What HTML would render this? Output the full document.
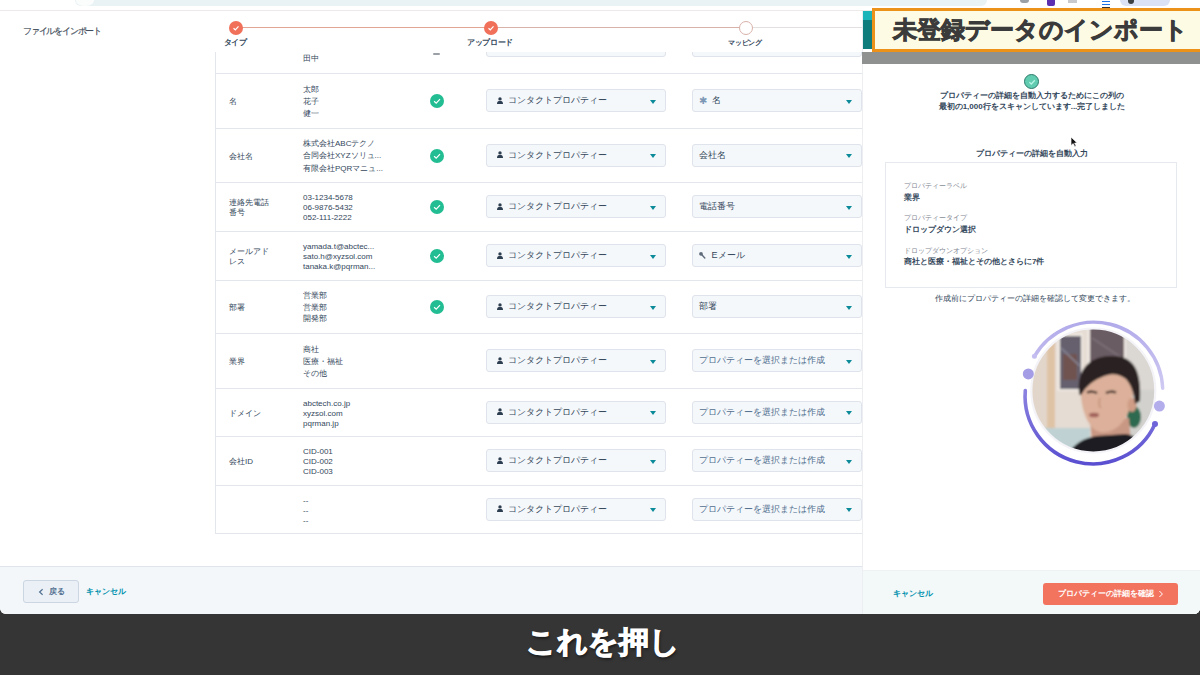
<!DOCTYPE html>
<html lang="ja">
<head>
<meta charset="utf-8">
<style>
*{box-sizing:border-box;margin:0;padding:0}
html,body{width:1200px;height:675px;overflow:hidden;background:#353535}
body{position:relative;font-family:"Liberation Sans",sans-serif;color:#33475b}
.abs{position:absolute}
#win{position:absolute;left:0;top:0;width:1200px;height:614px;background:#fff;border-radius:0 0 6px 6px;overflow:hidden}
#topbar{position:absolute;z-index:5;left:0;top:0;width:1200px;height:11px;background:#fff;border-bottom:1px solid #efeaea}
.pill{position:absolute;top:-6px;height:12px;border-radius:6px}
.step{position:absolute;top:20.5px;margin-left:0.7px;width:14px;height:14px;border-radius:50%;background:#f0705a}
.step svg{position:absolute;left:3px;top:3px}
.slabel{position:absolute;top:37.5px;font-size:7.6px;letter-spacing:-0.4px;font-weight:bold;color:#33475b;white-space:nowrap;transform:translateX(-50%)}
.row{position:absolute;left:215px;width:660px;border-bottom:1px solid #e3e7ec}
.lbl{position:absolute;left:14px;width:42px;font-size:8px;line-height:10px;color:#33475b;top:50%;transform:translateY(-50%);margin-top:1px}
.dat{position:absolute;left:88px;font-size:8px;color:#33475b;top:50%;transform:translateY(-50%);margin-top:1px;white-space:nowrap}
.chk{position:absolute;left:215px;width:14px;height:14px;border-radius:50%;background:#22bd92;top:50%;margin-top:-7px}
.chk svg{position:absolute;left:3px;top:3px}
.dd{position:absolute;height:23px;top:50%;margin-top:-12px;background:#f5f8fa;border:1px solid #dfe3eb;border-radius:3px;font-size:9px;line-height:21px;color:#33475b;white-space:nowrap}
.dd1{left:271px;width:180px}
.dd2{left:477px;width:170px}
.dd .t{position:absolute;left:20.5px;top:0}
.dd2 .t{left:6px}
.dd .ar{position:absolute;right:9.5px;top:9.5px;width:0;height:0;border-left:3.5px solid transparent;border-right:3.5px solid transparent;border-top:4px solid #0b8a9a}
.pi{position:absolute;left:10px;top:6.5px;width:6px;height:7px}

.dd2 .t2{left:18.5px}
#foot{position:absolute;left:0;top:566px;width:1200px;height:48px;background:#f3f7f9;border-top:1px solid #dfe5ea}
.btn-back{position:absolute;left:23px;top:13px;width:56px;height:23px;background:#eaf0f6;border:1px solid #cbd6e2;border-radius:3px;font-size:8px;font-weight:bold;color:#516f90;line-height:21px}
.link{position:absolute;font-size:8px;font-weight:bold;color:#0091ae;white-space:nowrap}
#panel{position:absolute;left:862px;top:0;width:338px;height:614px;background:#fff;border-left:1px solid #eceef1}
#pfoot{position:absolute;left:0;top:570px;width:338px;height:44px;background:#f3f8f9;border-top:1px solid #eef2f3}
.btn-pri{position:absolute;left:180px;top:12px;width:135px;height:22px;background:#f2735e;border-radius:3px;color:#fff;font-size:8px;font-weight:bold;line-height:22px;white-space:nowrap}
.ptxt{position:absolute;white-space:nowrap;font-size:8px;color:#33475b}
#banner{position:absolute;z-index:6;left:862px;top:8px;width:338px;height:56px}
#sub{position:absolute;left:0;top:614px;width:1200px;padding-left:5px;height:61px;text-align:center;color:#fff;font-weight:bold;font-size:30px;line-height:55px;text-shadow:1px 2px 3px rgba(0,0,0,.6);-webkit-text-stroke:1.1px #fff}
</style>
</head>
<body>
<div id="win">
  <div id="topbar">
    <div class="pill" style="left:75px;width:912px;background:#e9f2f5"></div><div class="pill" style="left:76px;width:18px;height:11px;top:-5px;background:#fbfcfc;border-radius:50%"></div>
    <div class="pill" style="left:1120px;width:50px;background:#dbe2f6"></div>
    <div class="abs" style="left:1128px;top:0;width:6px;height:4px;border-radius:0 0 3px 3px;background:#3c4043"></div>
    <div class="abs" style="left:1020px;top:0;width:9px;height:3px;border-radius:0 0 4px 4px;background:#9aa0a6"></div>
    <div class="abs" style="left:1047px;top:0;width:8px;height:6px;border-radius:0 0 2px 2px;background:#5b2fb0"></div>
    <div class="abs" style="left:1068px;top:0;width:9px;height:3px;background:#c7c9cc"></div>
    <div class="abs" style="left:1102px;top:1px;width:8px;height:1px;background:#1a73e8"></div>
    <div class="abs" style="left:1102px;top:4px;width:8px;height:1px;background:#1a73e8"></div>
    <div class="abs" style="left:1102px;top:7px;width:8px;height:1px;background:#333"></div>
  </div>

  <div class="abs" style="left:23px;top:26px;font-size:8.5px;letter-spacing:-1.2px;color:#3d4a57;-webkit-text-stroke:0.15px #3d4a57;white-space:nowrap">ファイルをインポート</div>

  <!-- stepper -->
  <div class="abs" style="left:235px;top:27px;width:255px;height:1px;background:#e2a596"></div><div class="abs" style="left:490px;top:27px;width:255px;height:1px;background:#d8b2a9"></div><div class="abs" style="left:750px;top:27px;width:112px;height:1px;background:#e4e0df"></div>
  <div class="step" style="left:228px"><svg width="8" height="8" viewBox="0 0 8 8"><path d="M1.5 4.2 L3.3 5.8 L6.5 2.3" stroke="#fff" stroke-width="1.2" fill="none"/></svg></div>
  <div class="step" style="left:483px"><svg width="8" height="8" viewBox="0 0 8 8"><path d="M1.5 4.2 L3.3 5.8 L6.5 2.3" stroke="#fff" stroke-width="1.2" fill="none"/></svg></div>
  <div class="step" style="left:738px;background:#fff;border:1px solid #d8b2a9"></div>
  <div class="slabel" style="left:235px">タイプ</div>
  <div class="slabel" style="left:490px">アップロード</div>
  <div class="slabel" style="left:745px;font-size:7.2px">マッピング</div>

  <div id="tbl" class="abs" style="left:0;top:52px;width:862px;height:482px;overflow:hidden">
<div class="abs" style="left:215px;top:0;width:1px;height:481px;background:#e3e7ec"></div>
<div class="row" style="top:-33px;height:55px">
<div class="lbl">姓</div>
<div class="dat" style="line-height:12px">山田<br>佐藤<br>田中</div>
<div class="dd dd1"><svg class="pi" viewBox="0 0 6 7"><circle cx="3" cy="1.9" r="1.7" fill="#2d3e50"/><path d="M0 7 C0 4.2 1.2 3.9 3 3.9 C4.8 3.9 6 4.2 6 7Z" fill="#2d3e50"/></svg><span class="t">コンタクトプロパティー</span><i class="ar"></i></div>
<div class="dd dd2"><span class="t">姓</span><i class="ar"></i></div>
</div>
<div class="row" style="top:22px;height:55px">
<div class="lbl">名</div>
<div class="dat" style="line-height:12px">太郎<br>花子<br>健一</div>
<div class="chk"><svg width="8" height="8" viewBox="0 0 8 8"><path d="M1.1 4.2 L3.2 6.1 L7 2.2" stroke="#fff" stroke-width="1.2" fill="none"/></svg></div>
<div class="dd dd1"><svg class="pi" viewBox="0 0 6 7"><circle cx="3" cy="1.9" r="1.7" fill="#2d3e50"/><path d="M0 7 C0 4.2 1.2 3.9 3 3.9 C4.8 3.9 6 4.2 6 7Z" fill="#2d3e50"/></svg><span class="t">コンタクトプロパティー</span><i class="ar"></i></div>
<div class="dd dd2"><span class="ic" style="position:absolute;left:6px;top:0;font-size:10px;color:#7c98b6">✱</span><span class="t t2">名</span><i class="ar"></i></div>
</div>
<div class="row" style="top:77px;height:54px">
<div class="lbl">会社名</div>
<div class="dat" style="line-height:12.5px">株式会社ABCテクノ<br>合同会社XYZソリュ...<br>有限会社PQRマニュ...</div>
<div class="chk"><svg width="8" height="8" viewBox="0 0 8 8"><path d="M1.1 4.2 L3.2 6.1 L7 2.2" stroke="#fff" stroke-width="1.2" fill="none"/></svg></div>
<div class="dd dd1"><svg class="pi" viewBox="0 0 6 7"><circle cx="3" cy="1.9" r="1.7" fill="#2d3e50"/><path d="M0 7 C0 4.2 1.2 3.9 3 3.9 C4.8 3.9 6 4.2 6 7Z" fill="#2d3e50"/></svg><span class="t">コンタクトプロパティー</span><i class="ar"></i></div>
<div class="dd dd2"><span class="t">会社名</span><i class="ar"></i></div>
</div>
<div class="row" style="top:131px;height:49px">
<div class="lbl">連絡先電話<br>番号</div>
<div class="dat" style="line-height:10px">03-1234-5678<br>06-9876-5432<br>052-111-2222</div>
<div class="chk"><svg width="8" height="8" viewBox="0 0 8 8"><path d="M1.1 4.2 L3.2 6.1 L7 2.2" stroke="#fff" stroke-width="1.2" fill="none"/></svg></div>
<div class="dd dd1"><svg class="pi" viewBox="0 0 6 7"><circle cx="3" cy="1.9" r="1.7" fill="#2d3e50"/><path d="M0 7 C0 4.2 1.2 3.9 3 3.9 C4.8 3.9 6 4.2 6 7Z" fill="#2d3e50"/></svg><span class="t">コンタクトプロパティー</span><i class="ar"></i></div>
<div class="dd dd2"><span class="t">電話番号</span><i class="ar"></i></div>
</div>
<div class="row" style="top:180px;height:49px">
<div class="lbl">メールアド<br>レス</div>
<div class="dat" style="line-height:10px">yamada.t@abctec...<br>sato.h@xyzsol.com<br>tanaka.k@pqrman...</div>
<div class="chk"><svg width="8" height="8" viewBox="0 0 8 8"><path d="M1.1 4.2 L3.2 6.1 L7 2.2" stroke="#fff" stroke-width="1.2" fill="none"/></svg></div>
<div class="dd dd1"><svg class="pi" viewBox="0 0 6 7"><circle cx="3" cy="1.9" r="1.7" fill="#2d3e50"/><path d="M0 7 C0 4.2 1.2 3.9 3 3.9 C4.8 3.9 6 4.2 6 7Z" fill="#2d3e50"/></svg><span class="t">コンタクトプロパティー</span><i class="ar"></i></div>
<div class="dd dd2"><svg class="ic" style="position:absolute;left:5px;top:6px" width="9" height="9" viewBox="0 0 9 9"><path d="M3.6 3.6 L6.8 7" stroke="#5d6b7a" stroke-width="1.4" stroke-linecap="round"/><circle cx="3" cy="2.9" r="1.9" fill="#5d6b7a"/></svg><span class="t t2">Eメール</span><i class="ar"></i></div>
</div>
<div class="row" style="top:229px;height:53px">
<div class="lbl">部署</div>
<div class="dat" style="line-height:11.7px">営業部<br>営業部<br>開発部</div>
<div class="chk"><svg width="8" height="8" viewBox="0 0 8 8"><path d="M1.1 4.2 L3.2 6.1 L7 2.2" stroke="#fff" stroke-width="1.2" fill="none"/></svg></div>
<div class="dd dd1"><svg class="pi" viewBox="0 0 6 7"><circle cx="3" cy="1.9" r="1.7" fill="#2d3e50"/><path d="M0 7 C0 4.2 1.2 3.9 3 3.9 C4.8 3.9 6 4.2 6 7Z" fill="#2d3e50"/></svg><span class="t">コンタクトプロパティー</span><i class="ar"></i></div>
<div class="dd dd2"><span class="t">部署</span><i class="ar"></i></div>
</div>
<div class="row" style="top:282px;height:55px">
<div class="lbl">業界</div>
<div class="dat" style="line-height:11.9px">商社<br>医療・福祉<br>その他</div>
<div class="dd dd1"><svg class="pi" viewBox="0 0 6 7"><circle cx="3" cy="1.9" r="1.7" fill="#2d3e50"/><path d="M0 7 C0 4.2 1.2 3.9 3 3.9 C4.8 3.9 6 4.2 6 7Z" fill="#2d3e50"/></svg><span class="t">コンタクトプロパティー</span><i class="ar"></i></div>
<div class="dd dd2"><span class="t" style="color:#516f90">プロパティーを選択または作成</span><i class="ar"></i></div>
</div>
<div class="row" style="top:337px;height:48px">
<div class="lbl">ドメイン</div>
<div class="dat" style="line-height:10.2px">abctech.co.jp<br>xyzsol.com<br>pqrman.jp</div>
<div class="dd dd1"><svg class="pi" viewBox="0 0 6 7"><circle cx="3" cy="1.9" r="1.7" fill="#2d3e50"/><path d="M0 7 C0 4.2 1.2 3.9 3 3.9 C4.8 3.9 6 4.2 6 7Z" fill="#2d3e50"/></svg><span class="t">コンタクトプロパティー</span><i class="ar"></i></div>
<div class="dd dd2"><span class="t" style="color:#516f90">プロパティーを選択または作成</span><i class="ar"></i></div>
</div>
<div class="row" style="top:385px;height:49px">
<div class="lbl">会社ID</div>
<div class="dat" style="line-height:10.1px">CID-001<br>CID-002<br>CID-003</div>
<div class="dd dd1"><svg class="pi" viewBox="0 0 6 7"><circle cx="3" cy="1.9" r="1.7" fill="#2d3e50"/><path d="M0 7 C0 4.2 1.2 3.9 3 3.9 C4.8 3.9 6 4.2 6 7Z" fill="#2d3e50"/></svg><span class="t">コンタクトプロパティー</span><i class="ar"></i></div>
<div class="dd dd2"><span class="t" style="color:#516f90">プロパティーを選択または作成</span><i class="ar"></i></div>
</div>
<div class="row" style="top:434px;height:48px">
<div class="lbl"></div>
<div class="dat" style="line-height:10px">--<br>--<br>--</div>
<div class="dd dd1"><svg class="pi" viewBox="0 0 6 7"><circle cx="3" cy="1.9" r="1.7" fill="#2d3e50"/><path d="M0 7 C0 4.2 1.2 3.9 3 3.9 C4.8 3.9 6 4.2 6 7Z" fill="#2d3e50"/></svg><span class="t">コンタクトプロパティー</span><i class="ar"></i></div>
<div class="dd dd2"><span class="t" style="color:#516f90">プロパティーを選択または作成</span><i class="ar"></i></div>
</div>
<div class="abs" style="left:433px;top:1px;width:7px;height:1.5px;background:#9aa0a6;border-radius:1px"></div>
</div><!--/tbl-->

  <div id="foot">
    <div class="btn-back"><svg class="abs" style="left:14px;top:7px" width="6" height="8" viewBox="0 0 6 8"><path d="M4.6 1.2 L1.6 4 L4.6 6.8" stroke="#516f90" stroke-width="1.2" fill="none"/></svg><span style="position:absolute;left:25px">戻る</span></div>
    <div class="link" style="left:86px;top:19px">キャンセル</div>
  </div>

  <div id="panel">
    <div class="abs" style="left:161px;top:74px;width:15px;height:15px;border-radius:50%;background:#62ccb0;border:1.2px solid #2b7a6b"><svg class="abs" style="left:2.5px;top:2.5px" width="8" height="8" viewBox="0 0 8 8"><path d="M1.4 4.3 L3.3 6 L6.8 2.2" stroke="#b9f5e6" stroke-width="1.3" fill="none"/></svg></div>
    <div class="ptxt" style="left:0;width:338px;text-align:center;top:91px;font-weight:bold;line-height:10.5px">プロパティーの詳細を自動入力するためにこの列の<br>最初の1,000行をスキャンしています...完了しました</div>
    <div class="ptxt" style="left:0;width:338px;text-align:center;top:148px;font-weight:bold">プロパティーの詳細を自動入力</div>
    <div class="abs" style="left:22px;top:162px;width:292px;height:126px;border:1px solid #e6e9ee"></div>
    <div class="ptxt" style="left:41px;top:181px;font-size:7px;color:#7f8791">プロパティーラベル</div>
    <div class="ptxt" style="left:41px;top:192px;font-weight:bold">業界</div>
    <div class="ptxt" style="left:41px;top:213px;font-size:7px;color:#7f8791">プロパティータイプ</div>
    <div class="ptxt" style="left:41px;top:224px;font-weight:bold">ドロップダウン選択</div>
    <div class="ptxt" style="left:41px;top:246px;font-size:7px;color:#7f8791">ドロップダウンオプション</div>
    <div class="ptxt" style="left:41px;top:256px;font-weight:bold">商社と医療・福祉とその他とさらに7件</div>
    <div class="ptxt" style="left:3px;width:338px;text-align:center;top:293px">作成前にプロパティーの詳細を確認して変更できます。</div>
    <div id="pfoot">
      <div class="link" style="left:30px;top:17px">キャンセル</div>
      <div class="btn-pri"><span style="position:absolute;left:15px">プロパティーの詳細を確認</span><svg class="abs" style="left:115px;top:7px" width="6" height="8" viewBox="0 0 6 8"><path d="M1.4 1 L4.4 4 L1.4 7" stroke="#fff" stroke-width="1" fill="none"/></svg></div>
    </div>
  </div>

  <div id="banner">
    <div class="abs" style="left:0;top:44px;width:338px;height:12px;background:#8f9191"></div>
    <div class="abs" style="left:1px;top:3px;width:9px;height:38px;background:#0e7d7b"></div>
    <div class="abs" style="left:1px;top:3px;width:9px;height:9px;background:#1bb4b8"></div>
    <div class="abs" style="left:10px;top:0;width:340px;height:44px;background:#fdfbe3;border:3px solid #ec921a;border-right:none"></div>
    <div class="abs" style="left:31px;top:6px;font-size:24px;font-weight:bold;color:#3b3b3b;white-space:nowrap;line-height:32px;-webkit-text-stroke:0.9px #3b3b3b">未登録データのインポート</div>
  </div>

  <svg class="abs" style="left:1010px;top:308px" width="168" height="168" viewBox="0 0 168 168">
    <defs>
      <clipPath id="cc"><circle cx="83.3" cy="82.5" r="62"/></clipPath>
      <linearGradient id="gb" x1="0" y1="0" x2="0" y2="1"><stop offset="0" stop-color="#8b82e0"/><stop offset="1" stop-color="#5a4fd0"/></linearGradient>
      <linearGradient id="gt" x1="0" y1="1" x2="0" y2="0"><stop offset="0" stop-color="#cfcaf2"/><stop offset="1" stop-color="#b1aaea"/></linearGradient>
      <filter id="bl"><feGaussianBlur stdDeviation="0.9"/></filter>
    </defs>
    <g clip-path="url(#cc)" filter="url(#bl)">
      <g transform="translate(20,20)">
      <rect x="-5" y="-5" width="140" height="140" fill="#e5dcd3"/>
      <rect x="-5" y="-5" width="22" height="140" fill="#e2d6ca"/>
      <rect x="17" y="-5" width="8" height="110" fill="#dfc3a5"/>
      <rect x="96" y="-5" width="40" height="140" fill="#dbd7d3"/>
      <rect x="96" y="62" width="40" height="70" fill="#d2d1cd"/>
      <rect x="27" y="5" width="26" height="58" fill="#eee8e2"/>
      <rect x="30" y="8" width="21" height="53" fill="#66606e"/>
      <rect x="33" y="26" width="14" height="26" fill="#70524f"/>
      <path d="M31 20 L50 38" stroke="#8a8a9a" stroke-width="1.5"/>
      <rect x="57" y="-4" width="39" height="41" fill="#eee8e2"/>
      <rect x="60" y="-2" width="34" height="37" fill="#6a5c63"/>
      <path d="M62 10 L92 30" stroke="#80767c" stroke-width="1.5"/>
      <rect x="-5" y="100" width="65" height="30" fill="#c0d1d3"/>
      <ellipse cx="104" cy="89" rx="7" ry="11" fill="#2f6a50"/>
      <path d="M60 92 L99 90 L101 114 L62 116 Z" fill="#c99884"/>
      <path d="M36 130 C42 116 54 110 66 108 L96 106 C108 108 118 116 122 130 Z" fill="#1f1e22"/>
      <path d="M51 58 C50 76 55 94 65 102 C71 106 81 105 89 98 C97 90 103 78 103 60 C103 45 90 38 76 38 C60 38 52 45 51 58 Z" fill="#dcb09a"/>
      <ellipse cx="102" cy="77" rx="4.5" ry="7" fill="#cf9c86"/>
      <path d="M49.5 67 C46 45 56 29 80 28 C101 27 112 38 110 73 L105 76 C104 66 102 58 96 51 C91 47 85 45.5 80 46.5 C72 48 62 53 55 61 L51 67 Z" fill="#2a2422"/>
      <path d="M57 64.5 Q62 62.5 67 65" stroke="#2e221f" stroke-width="2.2" fill="none"/>
      <path d="M76 65 Q81 62.5 86 64.5" stroke="#2e221f" stroke-width="2.2" fill="none"/>
      <path d="M70 70 Q68 78 71 80" stroke="#c4927e" stroke-width="1.5" fill="none"/>
      <ellipse cx="64" cy="87" rx="5" ry="2.3" fill="#a2625c"/>
      </g>
    </g>
    <circle cx="83.3" cy="82.5" r="62" fill="none" stroke="#f4f4f8" stroke-width="2.2"/>
    <path d="M24.4 48.3 A68.9 68.9 0 0 1 152.7 80.3" stroke="url(#gt)" stroke-width="3.4" fill="none" stroke-linecap="round"/>
    <path d="M15.3 82.5 A68 68 0 0 0 145 116" stroke="url(#gb)" stroke-width="3.6" fill="none" stroke-linecap="round"/>
    <circle cx="24.4" cy="48.3" r="2.5" fill="#c4bff0"/>
    <circle cx="145" cy="116" r="3" fill="#6e63d8"/>
    <circle cx="18.3" cy="65.9" r="5.5" fill="#a49de6"/>
    <circle cx="149.4" cy="98.1" r="5.5" fill="#b3adec"/>
  </svg>
  <svg class="abs" style="left:1070px;top:136px" width="9" height="12" viewBox="0 0 9 12"><path d="M1 1 L1 9.6 L3.2 7.6 L4.8 10.8 L6.1 10.1 L4.6 7.1 L7.2 6.9 Z" fill="#111" stroke="#fff" stroke-width="0.7"/></svg>
</div>
<div id="sub">これを押し</div>
</body>
</html>
